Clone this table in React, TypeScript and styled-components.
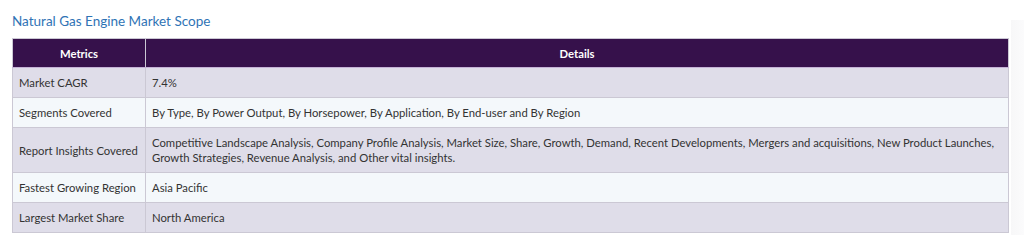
import styled, { createGlobalStyle } from 'styled-components';

const GlobalStyle = createGlobalStyle`
    body {
        margin: 0;
        background: #ffffff;
        font-family: Lato, "Open Sans", sans-serif;
    }
`

const rows = [
    { metric: 'Market CAGR', details: '7.4%' },
    {
        metric: 'Segments Covered',
        details: 'By Type, By Power Output, By Horsepower, By Application, By End-user and By Region',
    },
    {
        metric: 'Report Insights Covered',
        details:
            'Competitive Landscape Analysis, Company Profile Analysis, Market Size, Share, Growth, Demand, Recent Developments, Mergers and acquisitions, New Product Launches, Growth Strategies, Revenue Analysis, and Other vital insights.',
    },
    { metric: 'Fastest Growing Region', details: 'Asia Pacific' },
    { metric: 'Largest Market Share', details: 'North America' },
];

export default function App() {
    return (
        <Page>
            <GlobalStyle />
            <Section>
                <Title>Natural Gas Engine Market Scope</Title>
                <Table>
                    <thead>
                        <tr>
                            <HeadCell $width="120px">Metrics</HeadCell>
                            <HeadCell>Details</HeadCell>
                        </tr>
                    </thead>
                    <tbody>
                        {rows.map((row, i) => (
                            <Row key={row.metric} $odd={i % 2 === 0}>
                                <Cell>{row.metric}</Cell>
                                <Cell>{row.details}</Cell>
                            </Row>
                        ))}
                    </tbody>
                </Table>
            </Section>
            <Shade />
        </Page>
    );
}

const Page = styled.div`
    display: flex;
    width: 1024px;
    height: 247px;
    overflow: hidden;
`

const Section = styled.div`
    flex: 1;
    padding: 13px 0 0 12px;
`

const Shade = styled.div`
    width: 14px;
    margin: 20px 0 12px 2px;
    background: linear-gradient(to right, #f7f7f8, #fbfbfc);
`

const Title = styled.h2`
    margin: 0 0 9px;
    font-size: 13.5px;
    font-weight: 400;
    line-height: 16px;
    color: #2f73b5;
`

const Table = styled.table`
    width: 997px;
    border-collapse: collapse;
    font-size: 11.3px;
    color: #333333;
    border: 1px solid #cbc8d4;
`

const HeadCell = styled.th<{ $width?: string }>`
    width: ${(p) => p.$width || 'auto'};
    height: 28px;
    padding: 0 6px;
    background: #36114b;
    color: #ffffff;
    font-weight: 700;
    text-align: center;
    border-right: 1px solid #cbc8d4;
    border-bottom: 1px solid #c5b2d6;
`

const Row = styled.tr<{ $odd: boolean }>`
    background: ${(p) => (p.$odd ? '#dfdde9' : '#f4f8fb')};
    border-top: 1px solid #cbc8d4;
`

const Cell = styled.td`
    padding: 7px 6px 7px 6px;
    line-height: 15px;
    text-align: left;
    vertical-align: middle;
    border-right: 1px solid #cbc8d4;
`
